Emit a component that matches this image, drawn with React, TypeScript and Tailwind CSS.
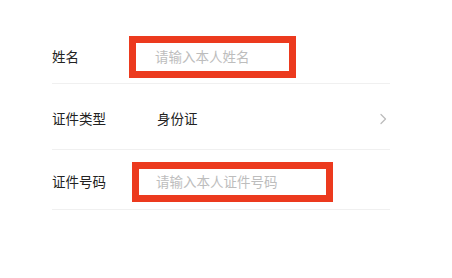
import React from "react";

export default function App() {
  return (
    <div
      className="w-[452px] h-[278px] bg-white overflow-hidden"
      style={{ fontFamily: '"Noto Sans CJK SC", "Noto Sans", sans-serif' }}
    >
      <div className="ml-[52px] w-[338px] pt-[30px]">
        {/* Row 1 */}
        <div className="flex items-center h-[54px] border-b border-[#f0f0f0]">
          <div className="w-[77px] text-[13.5px] text-[#222222] leading-none">姓名</div>
          <div className="w-[167px] h-[42px] border-[7px] border-[#ec3a1e] bg-white flex items-center pl-[19px]">
            <span className="text-[13.5px] text-[#bdbdbd] leading-none">请输入本人姓名</span>
          </div>
        </div>
        {/* Row 2 */}
        <div className="flex items-center h-[66px] pt-[5px] border-b border-[#f0f0f0]">
          <div className="w-[105px] text-[13.5px] text-[#222222] leading-none">证件类型</div>
          <div className="flex-1 text-[13.5px] text-[#222222] leading-none">身份证</div>
          <svg width="8" height="12" viewBox="0 0 8 12" className="mr-[3px]">
            <path d="M2 1.5 L6.5 6 L2 10.5" fill="none" stroke="#bcbcbc" strokeWidth="1.3" strokeLinecap="round" strokeLinejoin="round" />
          </svg>
        </div>
        {/* Row 3 */}
        <div className="flex items-center h-[60px] pt-[4px] border-b border-[#f0f0f0]">
          <div className="w-[80px] text-[13.5px] text-[#222222] leading-none">证件号码</div>
          <div className="w-[201px] h-[40px] border-[7px] border-[#ec3a1e] bg-white flex items-center pl-[17px]">
            <span className="text-[13.5px] text-[#bdbdbd] leading-none">请输入本人证件号码</span>
          </div>
        </div>
      </div>
    </div>
  );
}
